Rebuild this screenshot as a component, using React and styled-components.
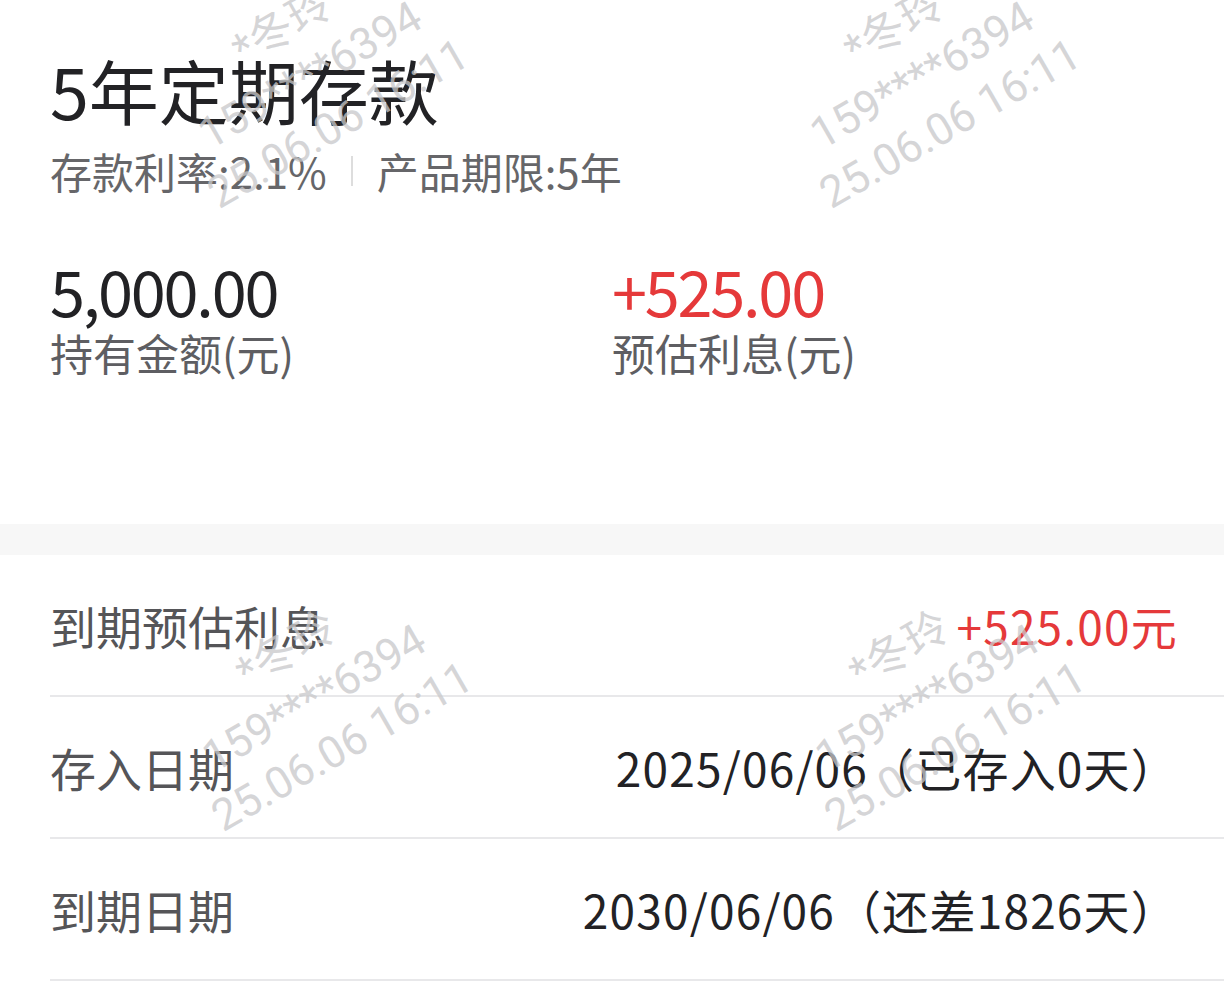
import React from "react";
import styled, { createGlobalStyle } from "styled-components";

const GlobalStyle = createGlobalStyle`
  html, body { margin: 0; padding: 0; background: #ffffff; }
  body { font-family: "Noto Sans CJK SC", "Noto Sans", sans-serif; }
  * { box-sizing: border-box; }
`;

const Page = styled.div`
  position: relative;
  width: 1224px;
  min-height: 1006px;
  background: #ffffff;
  overflow: hidden;
`;

const Header = styled.section`
  padding: 48px 50px 143px 50px;
  display: flex;
  flex-direction: column;
`;

const Title = styled.h1`
  margin: 0;
  font-size: 70px;
  line-height: 84px;
  font-weight: 400;
  color: #222225;
`;

const Meta = styled.div`
  margin-top: 11px;
  display: flex;
  align-items: center;
  font-size: 42px;
  line-height: 55px;
  color: #666669;
`;

const Sep = styled.span`
  display: inline-block;
  width: 2px;
  height: 30px;
  background: #dddddd;
  margin: 0 24px;
`;

const Stats = styled.div`
  margin-top: 59px;
  display: grid;
  grid-template-columns: 1fr 1fr;
`;

const Stat = styled.div`
  display: flex;
  flex-direction: column;
`;

const StatValue = styled.div`
  font-size: 63px;
  line-height: 66px;
  font-weight: 400;
  letter-spacing: -2.2px;
  color: ${(p) => (p.$red ? "#e5393a" : "#222225")};
`;

const StatLabel = styled.div`
  font-size: 43px;
  line-height: 58px;
  color: #5e5e62;
`;

const Band = styled.div`
  height: 31px;
  background: #f7f7f7;
`;

const List = styled.div`
  display: flex;
  flex-direction: column;
`;

const Row = styled.div`
  margin-left: 50px;
  height: 142px;
  padding-right: 46px;
  border-bottom: 2px solid #e8e8ea;
  display: flex;
  align-items: center;
  justify-content: space-between;
  font-size: 46px;
`;

const RowLabel = styled.span`
  color: #555558;
`;

const RowValue = styled.span`
  letter-spacing: 1.2px;
  color: ${(p) => (p.$red ? "#e5393a" : "#222225")};
`;

const Watermark = styled.div`
  position: absolute;
  pointer-events: none;
  display: flex;
  flex-direction: column;
  align-items: center;
  transform: translate(-50%, -50%) rotate(-30deg);
  font-family: Roboto, "Noto Sans CJK SC", sans-serif;
  font-size: 44px;
  line-height: 56px;
  color: rgba(200, 200, 202, 0.75);
  white-space: nowrap;
`;

const marks = [
  [310, 75],
  [922, 75],
  [314, 698],
  [927, 698],
];

export default function App() {
  return (
    <Page>
      <GlobalStyle />
      <Header>
        <Title>5年定期存款</Title>
        <Meta>
          <span>存款利率:2.1%</span>
          <Sep />
          <span>产品期限:5年</span>
        </Meta>
        <Stats>
          <Stat>
            <StatValue>5,000.00</StatValue>
            <StatLabel>持有金额(元)</StatLabel>
          </Stat>
          <Stat>
            <StatValue $red>+525.00</StatValue>
            <StatLabel>预估利息(元)</StatLabel>
          </Stat>
        </Stats>
      </Header>
      <Band />
      <List>
        <Row>
          <RowLabel>到期预估利息</RowLabel>
          <RowValue $red>+525.00元</RowValue>
        </Row>
        <Row>
          <RowLabel>存入日期</RowLabel>
          <RowValue>2025/06/06（已存入0天）</RowValue>
        </Row>
        <Row>
          <RowLabel>到期日期</RowLabel>
          <RowValue>2030/06/06（还差1826天）</RowValue>
        </Row>
      </List>
      {marks.map(([x, y], i) => (
        <Watermark key={i} style={{ left: x, top: y }}>
          <span>*冬玲</span>
          <span>159****6394</span>
          <span>25.06.06 16:11</span>
        </Watermark>
      ))}
    </Page>
  );
}
